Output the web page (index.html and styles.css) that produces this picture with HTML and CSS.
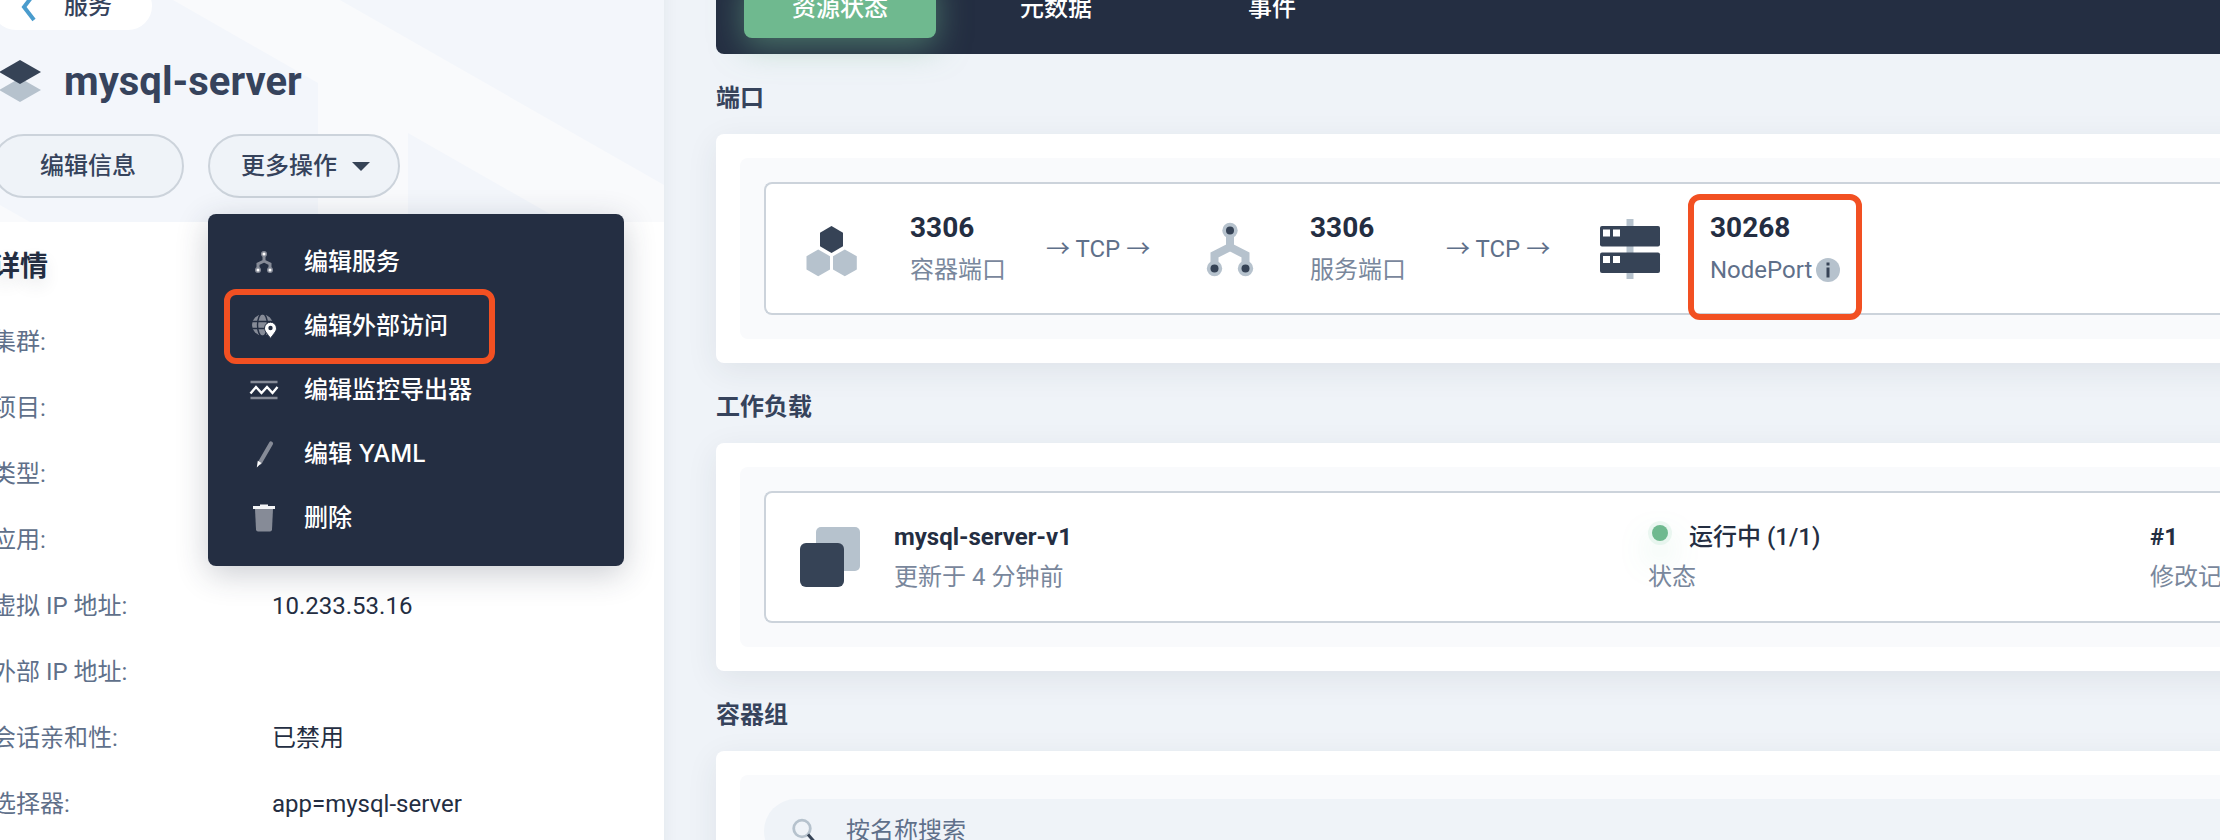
FILE: index.html
```html
<!DOCTYPE html>
<html lang="zh-CN">
<head>
<meta charset="utf-8">
<title>mysql-server</title>
<link rel="stylesheet" href="styles.css">
</head>
<body>
<div class="app">
  <aside class="sidebar">
    <header class="side-head">
      <svg class="side-pattern" width="664" height="222" viewBox="0 0 664 222" aria-hidden="true">
        <path d="M173 0H340L664 185V222H564L408 133V222H318V83ZM0 205L30 222H0Z" fill="#f9fafc"/>
      </svg>
      <div class="side-inner">
        <a class="back" href="#">
          <svg width="16" height="32" viewBox="0 0 16 32" aria-hidden="true"><path d="M14 4L4 17L14 30" fill="none" stroke="#4a9ccd" stroke-width="4"/></svg>
          <span>服务</span>
        </a>
        <div class="title-row">
          <svg width="48" height="48" viewBox="0 0 48 48" aria-hidden="true"><path d="M24 20L45 32L24 44L3 32Z" fill="#b6c2cd"/><path d="M24 2L45 14L24 26L3 14Z" fill="#364356"/></svg>
          <h1>mysql-server</h1>
        </div>
        <div class="actions">
          <button class="btn btn-edit" type="button">编辑信息</button>
          <div class="dropdown">
            <button class="btn btn-more" type="button" aria-expanded="true">更多操作
              <svg width="20" height="12" viewBox="0 0 20 12" aria-hidden="true"><path d="M1 2H19L10 11Z" fill="#364356"/></svg>
            </button>
            <ul class="menu">
              <li><button type="button">
                <svg width="32" height="32" viewBox="0 0 32 32" aria-hidden="true"><g fill="none" stroke="#868b97" stroke-width="3"><path d="M16 10V15L10 18V23M16 15L22 18V23"/></g><g fill="#868b97"><circle cx="16" cy="8" r="3"/><circle cx="10" cy="24" r="3"/><circle cx="22" cy="24" r="3"/></g><g fill="#fff"><circle cx="16" cy="8" r="1.5"/><circle cx="10" cy="24" r="1.5"/><circle cx="22" cy="24" r="1.5"/></g></svg>
                <span>编辑服务</span></button></li>
              <li class="marked"><button type="button">
                <svg width="32" height="32" viewBox="0 0 32 32" aria-hidden="true"><circle cx="14.5" cy="15" r="10.5" fill="#868b97"/><g fill="none" stroke="#242e42" stroke-width="1.4"><path d="M3 11.5H26M3 18.5H26"/><ellipse cx="14.5" cy="15" rx="5" ry="11.5"/></g><path d="M22.5 12.2a6 6 0 0 1 6 6c0 3.6-3.5 6-6 10.3c-2.500-4.300-6-6.700-6-10.300a6 6 0 0 1 6-6Z" fill="#fff" stroke="#242e42" stroke-width="1"/><circle cx="22.500" cy="18" r="2.200" fill="#242e42"/></svg>
                <span>编辑外部访问</span></button></li>
              <li><button type="button">
                <svg width="32" height="32" viewBox="0 0 32 32" aria-hidden="true"><path d="M2.500 8H29.500M2.500 24H29.500" stroke="#868b97" stroke-width="2.400"/><path d="M2.500 19.500L8 13L13.500 19L19 13L24.500 19L29.500 13" fill="none" stroke="#fff" stroke-width="2.400"/></svg>
                <span>编辑监控导出器</span></button></li>
              <li><button type="button">
                <svg width="32" height="32" viewBox="0 0 32 32" aria-hidden="true"><path d="M23 5.500L12 24.500" stroke="#868b97" stroke-width="4.200" stroke-linecap="round"/><path d="M9.800 22.800L13.400 25L8.800 29.500Z" fill="#fff"/></svg>
                <span>编辑 YAML</span></button></li>
              <li><button type="button">
                <svg width="32" height="32" viewBox="0 0 32 32" aria-hidden="true"><path d="M7 7H25L24 27.500Q23.900 29.500 22 29.500H10Q8.100 29.500 8 27.500Z" fill="#868b97"/><path d="M5 4H12V2.500H20V4H27V7H5Z" fill="#f3f4f6"/></svg>
                <span>删除</span></button></li>
            </ul>
          </div>
        </div>
      </div>
    </header>
    <section class="details">
      <h2>详情</h2>
      <dl>
        <div><dt>集群:</dt><dd></dd></div>
        <div><dt>项目:</dt><dd></dd></div>
        <div><dt>类型:</dt><dd></dd></div>
        <div><dt>应用:</dt><dd></dd></div>
        <div><dt>虚拟 IP 地址:</dt><dd>10.233.53.16</dd></div>
        <div><dt>外部 IP 地址:</dt><dd></dd></div>
        <div><dt>会话亲和性:</dt><dd>已禁用</dd></div>
        <div><dt>选择器:</dt><dd>app=mysql-server</dd></div>
      </dl>
    </section>
  </aside>

  <main class="content">
    <nav class="tabs">
      <a class="tab active" href="#">资源状态</a>
      <a class="tab" href="#">元数据</a>
      <a class="tab" href="#">事件</a>
    </nav>

    <h3>端口</h3>
    <section class="card"><div class="panel"><div class="box ports">
      <div class="port">
        <svg width="64" height="64" viewBox="0 0 64 64" aria-hidden="true"><path d="M31.500 9L43 15.700V29.300L31.500 36L20 29.300V15.700Z" fill="#364356"/><path d="M18.200 32.500L30 39.200V52.500L18.200 59.200L6.500 52.500V39.200ZM44.800 32.500L56.800 39.200V52.500L44.800 59.200L33 52.500V39.200Z" fill="#b6c2cd"/></svg>
        <div class="lines"><strong>3306</strong><span>容器端口</span></div>
        <div class="proto">→ TCP →</div>
      </div>
      <div class="port">
        <svg width="64" height="64" viewBox="0 0 64 64" aria-hidden="true"><path d="M30 18V30L14.500 38V51M30 30L45.500 38V51" fill="none" stroke="#b6c2cd" stroke-width="8"/><g fill="#b6c2cd"><circle cx="30" cy="13.500" r="7.700"/><circle cx="14.500" cy="51.500" r="7.700"/><circle cx="45.500" cy="51.500" r="7.700"/></g><g fill="#364356"><circle cx="30" cy="13.500" r="4"/><circle cx="14.500" cy="51.500" r="4"/><circle cx="45.500" cy="51.500" r="4"/></g></svg>
        <div class="lines"><strong>3306</strong><span>服务端口</span></div>
        <div class="proto">→ TCP →</div>
      </div>
      <div class="port">
        <svg width="64" height="64" viewBox="0 0 64 64" aria-hidden="true"><path d="M26.500 2H33.500V62H26.500Z" fill="#b6c2cd"/><rect x="0" y="9" width="60" height="20.500" rx="2" fill="#364356"/><rect x="0" y="35.500" width="60" height="20.500" rx="2" fill="#364356"/><path d="M3 12.500H10V19.500H3ZM13 12.500H20V19.500H13ZM3 39H10V46H3ZM13 39H20V46H13Z" fill="#fff"/></svg>
        <div class="lines node"><strong>30268</strong><span class="node-type">NodePort
          <svg width="24" height="24" viewBox="0 0 24 24" aria-hidden="true"><circle cx="12" cy="12" r="12" fill="#b6c2cd"/><path d="M10.500 4.500H13.500V7.500H10.500ZM10.500 9.500H13.500V19.500H10.500Z" fill="#364356"/></svg></span></div>
      </div>
    </div></div></section>

    <h3>工作负载</h3>
    <section class="card"><div class="panel"><div class="box workload">
      <div class="wl-name">
        <svg width="60" height="60" viewBox="0 0 60 60" aria-hidden="true"><rect x="16" y="0" width="44" height="44" rx="5" fill="#b6c2cd"/><rect x="0" y="16" width="44" height="44" rx="6" fill="#364356"/></svg>
        <div class="lines"><strong>mysql-server-v1</strong><span>更新于 4 分钟前</span></div>
      </div>
      <div class="lines wl-status"><strong><i class="dot"></i>运行中 (1/1)</strong><span>状态</span></div>
      <div class="lines wl-rev"><strong>#1</strong><span>修改记录</span></div>
    </div></div></section>

    <h3>容器组</h3>
    <section class="card"><div class="panel pods">
      <label class="search">
        <svg width="32" height="32" viewBox="0 0 32 32" aria-hidden="true"><circle cx="13" cy="13.500" r="8.300" fill="none" stroke="#b6c2cd" stroke-width="2.800"/><path d="M19 19.500L26.500 28" stroke="#364356" stroke-width="3"/></svg>
        <input type="text" placeholder="按名称搜索" aria-label="按名称搜索">
      </label>
    </div></section>
  </main>
</div>
</body>
</html>
```
FILE: styles.css
```css
*, *::before, *::after { box-sizing: border-box; }

body {
  margin: 0;
  height: 100vh;
  overflow: hidden;
  background: #eff3f8;
  color: #242e42;
  font: 400 24px/40px Roboto, "Noto Sans CJK SC", sans-serif;
}

h1, h2, h3, ul, dl, dd { margin: 0; padding: 0; }
ul { list-style: none; }
a { color: inherit; text-decoration: none; }
button, input { font: inherit; color: inherit; }
svg { flex: none; display: block; }

/* The page is scrolled slightly, so its top lies above the window. */
.app {
  display: flex;
  min-height: calc(100vh + 42px);
  margin-top: -42px;
}

/* Sidebar */
.sidebar {
  flex: 0 0 664px;
  background: #fff;
  box-shadow: 0 8px 16px rgba(36, 46, 66, 0.06);
}
.side-head {
  position: relative;
  padding: 24px 0;
  background: #f3f6fb;
}
.side-pattern { position: absolute; left: 0; bottom: 0; }
.side-inner { position: relative; z-index: 1; margin-left: -8px; }

.back {
  display: inline-flex;
  align-items: center;
  gap: 28px;
  height: 48px;
  padding: 0 40px 0 28px;
  border-radius: 24px;
  background: #fff;
  color: #36435c;
  font-weight: 500;
  vertical-align: top;
}
.title-row {
  display: flex;
  align-items: center;
  gap: 20px;
  height: 56px;
  margin: 24px 0;
  padding-left: 4px;
  color: #36435c;
}
.title-row h1 { font-size: 40px; line-height: 56px; font-weight: 700; }

.actions { display: flex; gap: 24px; }
.btn {
  display: flex;
  align-items: center;
  gap: 14px;
  height: 64px;
  border: 2px solid #ccd3db;
  border-radius: 32px;
  background: #eff3f8;
  color: #36435c;
  font-weight: 500;
}
.btn-edit { padding: 0 46px; }
.btn-more { padding: 0 27px 0 31px; }

.dropdown { position: relative; }
.menu {
  position: absolute;
  top: 80px;
  left: 0;
  width: 416px;
  padding: 16px 0;
  border-radius: 8px;
  background: #242e42;
  box-shadow: 0 8px 32px rgba(36, 46, 66, 0.24);
  font-family: Inter, "Noto Sans CJK SC", sans-serif;
}
.menu button {
  display: flex;
  align-items: center;
  gap: 24px;
  width: 100%;
  height: 64px;
  padding: 0 40px;
  border: 0;
  background: none;
  color: #fff;
  font-weight: 500;
}

/* Highlight frames drawn over the content */
.marked, .node { position: relative; }
.marked::after, .node::after {
  content: "";
  position: absolute;
  border: 6px solid #f25022;
  border-radius: 12px;
  pointer-events: none;
}
.marked::after { top: -5px; bottom: -6px; left: 16px; width: 271px; }
.node::after { top: -14px; bottom: -30px; left: -22px; right: -22px; }

.details { padding: 25px 0 0; margin-left: -8px; }
.details h2 {
  font-size: 28px;
  line-height: 40px;
  font-weight: 700;
  text-shadow: 0 8px 16px rgba(36, 46, 66, 0.1);
}
.details dl { margin-top: 22px; }
.details dl div { display: flex; align-items: center; height: 66px; }
.details dt { flex: 0 0 280px; color: #5f708a; }

/* Content */
.content { flex: 1; min-width: 0; padding-left: 52px; overflow: hidden; }

.tabs {
  display: flex;
  gap: 24px;
  padding: 16px 28px;
  border-radius: 8px 0 0 8px;
  background: #242e42;
}
.tab {
  min-width: 192px;
  height: 64px;
  border-radius: 8px;
  line-height: 68px;
  color: #fff;
  font-weight: 500;
  text-align: center;
}
.tab.active {
  position: relative;
  background: #6fb98f;
  box-shadow: 0 8px 32px rgba(111, 185, 143, 0.5);
}

h3 {
  margin: 24px 0 16px;
  font-size: 24px;
  line-height: 40px;
  font-weight: 600;
  color: #36435c;
}

/* Cards run on past the right edge of the window. */
.card {
  margin-right: -48px;
  padding: 24px 0 24px 24px;
  border-radius: 8px;
  background: #fff;
  box-shadow: 0 8px 32px rgba(36, 46, 66, 0.08);
}
.panel { padding: 24px 0 24px 24px; border-radius: 8px 0 0 8px; background: #f9fafc; }
.box {
  display: flex;
  align-items: center;
  min-height: 132px;
  border: 2px solid #ccd3db;
  border-right: 0;
  border-radius: 8px 0 0 8px;
  background: #fff;
  padding-left: 34px;
}

.ports { min-height: 133px; }
.port { display: flex; align-items: center; flex: 0 0 400px; }
.port .lines { margin-left: 46px; gap: 2px; }
.port strong { font-size: 28px; }
.proto { margin-left: 40px; color: #5f708a; white-space: nowrap; }

.lines { display: flex; flex-direction: column; white-space: nowrap; }
.lines strong { font-weight: 700; }
.lines span { color: #79879c; }
.lines .node-type { display: flex; align-items: center; gap: 4px; color: #5f708a; }

.workload { display: grid; grid-template-columns: 848px 502px auto; }
.wl-name { display: flex; align-items: center; gap: 34px; }
.wl-status strong { display: flex; align-items: center; font-weight: 500; }
.dot {
  width: 16px;
  height: 16px;
  margin: 0 21px 8px 4px;
  border-radius: 50%;
  background: #6fb98f;
  box-shadow: 0 0 0 4px rgba(85, 188, 138, 0.1), 0 16px 32px rgba(85, 188, 138, 0.36);
}

.search {
  display: flex;
  align-items: center;
  gap: 25px;
  height: 64px;
  padding: 0 25px;
  border-radius: 32px 0 0 32px;
  background: #eff3f8;
}
.search input {
  flex: 1;
  padding: 0;
  border: 0;
  outline: 0;
  background: none;
}
.search input::placeholder { color: #5f708a; opacity: 1; }
```
